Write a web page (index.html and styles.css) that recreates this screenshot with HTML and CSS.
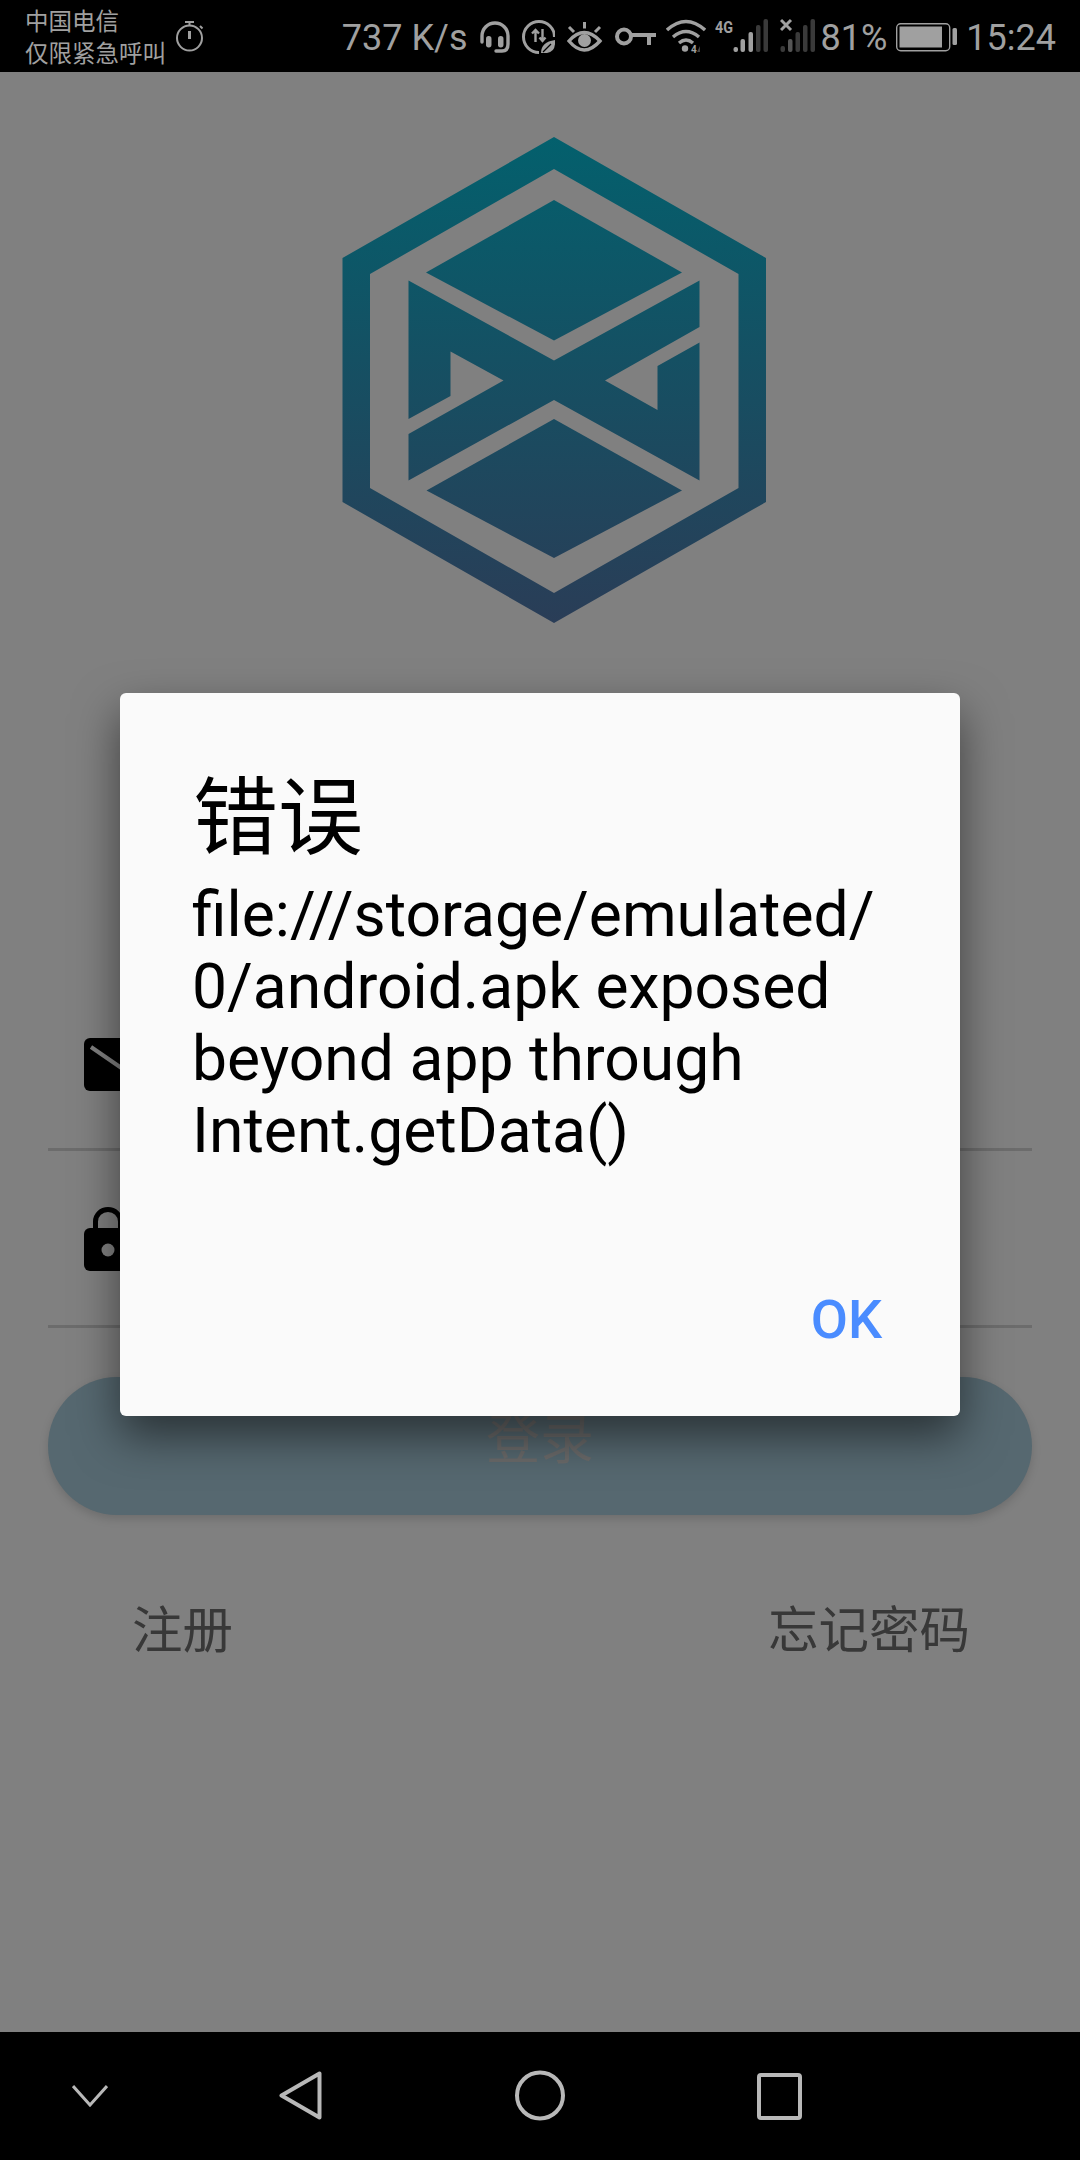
FILE: index.html
```html
<!DOCTYPE html>
<html lang="zh-CN">

<head>
    <title>登录</title>
    <link rel="stylesheet" href="styles.css">
</head>

<body>
    <div class="phone">
        <div class="statusbar">
            <div class="status-left">
                <div class="carrier">中国电信<br>仅限紧急呼叫</div>
                <svg class="icon" width="28" height="72" viewBox="177 0 28 72">
                    <circle cx="190.5" cy="38" r="12.5" fill="none" stroke="#a0a0a0" stroke-width="2" />
                    <path d="M186 22h9M190.5 22v4M201 26l2.5 2.5" fill="none" stroke="#a0a0a0" stroke-width="2" />
                    <path d="M190.5 31v8" fill="none" stroke="#a0a0a0" stroke-width="3" />
                </svg>
            </div>
            <div class="status-right">
                <span class="speed">737 K/s</span>
                <svg class="icon" width="30" height="72" viewBox="479 0 30 72">
                    <path d="M481 42v-6a13 13 0 0 1 26 0v8q0 7-6 7h-6" fill="none" stroke="#a0a0a0" stroke-width="3.4" stroke-linecap="round" />
                    <rect x="485" y="36" width="5.5" height="11.5" rx="2.7" fill="#a0a0a0" />
                    <rect x="497" y="36" width="5.5" height="11.5" rx="2.7" fill="#a0a0a0" />
                </svg>
                <svg class="icon" width="33" height="72" viewBox="521 0 33 72">
                    <path d="M538 52.5a15.5 15.5 0 1 1 15.5-15.5" fill="none" stroke="#a0a0a0" stroke-width="3" />
                    <path d="M534.5 42V30M531 33.5l3.5-3.5 3.5 3.5M541.5 29v12M538.5 37.5l3 3.5 3-3.5" fill="none" stroke="#a0a0a0" stroke-width="2.4" />
                    <path d="M540 53q0-11 14-13 1 12-8 13z" fill="#a0a0a0" />
                    <path d="M542 52l8-8" stroke="#000" stroke-width="1.2" />
                </svg>
                <svg class="icon" width="36" height="72" viewBox="566 0 36 72">
                    <path d="M568 41q15-17 31 0q-16 18-31 0z" fill="none" stroke="#a0a0a0" stroke-width="3.4" />
                    <circle cx="583.5" cy="40.5" r="6.5" fill="#a0a0a0" />
                    <path d="M583.5 22v6.500M568 27l5 5M599 27l-5 5" stroke="#a0a0a0" stroke-width="3" />
                </svg>
                <svg class="icon" width="41" height="72" viewBox="614 0 41 72">
                    <circle cx="623" cy="36.500" r="7" fill="none" stroke="#a0a0a0" stroke-width="4" />
                    <path d="M630 35h25M648 35v10" fill="none" stroke="#a0a0a0" stroke-width="4" />
                </svg>
                <svg class="icon icon-wifi" width="40" height="72" viewBox="665 0 40 72">
                    <path d="M666 30q19-17 38 0M672 37q13-11 26 0M678 43q7-6 14 0" fill="none" stroke="#a0a0a0" stroke-width="3.400" />
                    <circle cx="684" cy="48.500" r="3.200" fill="#a0a0a0" />
                    <text x="690" y="53" font-size="10" font-weight="700" font-family="Roboto" fill="#a0a0a0">4</text>
                    <path d="M699 46v6h-3z" fill="#444" />
                </svg>
                <svg class="icon icon-sim1" width="53" height="72" viewBox="714 0 53 72">
                    <text x="714" y="33" font-size="17" font-weight="700" font-family="Roboto" fill="#a0a0a0" textLength="18" lengthAdjust="spacingAndGlyphs">4G</text>
                    <rect x="732.500" y="47" width="4.500" height="5" rx="2" fill="#a0a0a0" />
                    <rect x="739.500" y="39" width="4.500" height="13" rx="2" fill="#a0a0a0" />
                    <rect x="747.500" y="32" width="4.500" height="20" rx="2" fill="#a0a0a0" />
                    <rect x="755" y="25" width="4.500" height="27" rx="2" fill="#3a3a3a" />
                    <rect x="762.500" y="19" width="4.500" height="33" rx="2" fill="#3a3a3a" />
                </svg>
                <svg class="icon" width="35" height="72" viewBox="779 0 35 72">
                    <path d="M780 20l10 10M790 20l-10 10" stroke="#a0a0a0" stroke-width="3" />
                    <rect x="779.500" y="46" width="4.500" height="6" rx="2" fill="#3a3a3a" />
                    <rect x="787" y="39" width="4.500" height="13" rx="2" fill="#555" />
                    <rect x="794.500" y="32" width="4.500" height="20" rx="2" fill="#3a3a3a" />
                    <rect x="802" y="25" width="4.500" height="27" rx="2" fill="#3a3a3a" />
                    <rect x="809.500" y="19" width="4.500" height="33" rx="2" fill="#3a3a3a" />
                </svg>
                <span class="percent">81%</span>
                <svg class="icon icon-battery" width="61" height="72" viewBox="896 0 61 72">
                    <rect x="896.700" y="23.700" width="53" height="27" rx="4" fill="none" stroke="#a0a0a0" stroke-width="1.400" />
                    <rect x="899.500" y="26.500" width="42.500" height="21" fill="#a0a0a0" />
                    <rect x="952.500" y="28" width="4.500" height="17" rx="1.500" fill="#a0a0a0" />
                </svg>
                <span class="clock">15:24</span>
            </div>
        </div>

        <div class="main">
            <svg class="logo" width="424" height="486" viewBox="342 137 424 486">
                <defs>
                    <linearGradient id="logoGrad" gradientUnits="userSpaceOnUse" x1="0" y1="137" x2="0" y2="623">
                        <stop offset="0" stop-color="#03606d" />
                        <stop offset="1" stop-color="#2a3d57" />
                    </linearGradient>
                </defs>
                <path fill="url(#logoGrad)" fill-rule="evenodd"
                    d="M554 137L766 258V502L554 623L342.500 502V258ZM554 169L370 274V488L554 593L738.500 488V274Z" />
                <path fill="url(#logoGrad)" d="M554 200L682 272.500L554 340.500L426 272.500Z" />
                <path fill="url(#logoGrad)" d="M554 419L682 490.500L554 558L426.500 490.500Z" />
                <path fill="url(#logoGrad)"
                    d="M408.500 280.500L554 360.500L699.500 280.500V327L605 380.500L657.500 410V366L699.500 342.500V480.500L554 400L408.500 480.500V434L503.500 380.500L450.500 351.500V396L408.500 419Z" />
            </svg>

            <div class="form">
                <div class="form-row">
                    <svg class="row-icon" width="72" height="53" viewBox="0 0 72 53">
                        <rect width="72" height="53" rx="6" fill="#000" />
                        <path d="M7 9L36 29L65 9" fill="none" stroke="#808080" stroke-width="4" />
                    </svg>
                </div>
                <div class="form-row form-row-2">
                    <svg class="row-icon" width="48" height="64" viewBox="0 0 48 64">
                        <path d="M11.500 24V14.500a12.500 12 0 0 1 25 0V24" fill="none" stroke="#000" stroke-width="5" />
                        <rect y="21" width="48" height="43" rx="6" fill="#000" />
                        <circle cx="24" cy="43" r="6.500" fill="#808080" />
                    </svg>
                </div>
                <div class="login-btn">登录</div>
                <div class="links">
                    <span>注册</span>
                    <span>忘记密码</span>
                </div>
            </div>

            <div class="dialog">
                <div class="dialog-title">错误</div>
                <div class="dialog-msg">file:///storage/emulated/<br>0/android.apk exposed<br>beyond app through<br>Intent.getData()</div>
                <div class="dialog-ok">OK</div>
            </div>
        </div>

        <div class="navbar">
            <svg class="nav-chevron" width="36" height="128" viewBox="72 2032 36 128">
                <path d="M73 2086L90 2105L107 2086" fill="none" stroke="#b8b8b8" stroke-width="3" />
            </svg>
            <svg class="nav-back" width="43" height="128" viewBox="279 2032 43 128">
                <path d="M319.500 2073.500V2117.500L281.500 2095.500Z" fill="none" stroke="#b8b8b8" stroke-width="4" stroke-linejoin="round" />
            </svg>
            <svg class="nav-home" width="50" height="128" viewBox="515 2032 50 128">
                <circle cx="540" cy="2095.500" r="23" fill="none" stroke="#b8b8b8" stroke-width="4" />
            </svg>
            <svg class="nav-recent" width="45" height="128" viewBox="757 2032 45 128">
                <rect x="759" y="2075" width="41" height="43" rx="2" fill="none" stroke="#b8b8b8" stroke-width="4" />
            </svg>
        </div>
    </div>
</body>

</html>
```

FILE: styles.css
```css
body {
    font-family: Roboto, "Noto Sans CJK SC", sans-serif;
    margin: 0;
    padding: 0;
}

.phone {
    width: 1080px;
    height: 2160px;
    display: flex;
    flex-direction: column;
    overflow: hidden;
    background-color: #808080;
}

.statusbar {
    height: 72px;
    flex: none;
    display: flex;
    justify-content: space-between;
    padding: 0 24px 0 25px;
    background-color: #000;
    color: #a0a0a0;
}

.status-left,
.status-right {
    display: flex;
    align-items: center;
}

.status-left {
    gap: 10px;
}

.status-right > * {
    margin-left: 12px;
}

.icon {
    display: block;
    flex: none;
}

.carrier {
    font-family: "Noto Sans CJK SC", sans-serif;
    font-size: 23.5px;
    line-height: 32px;
}

.speed,
.percent,
.clock {
    align-self: flex-start;
    padding-top: 2px;
    font-size: 36px;
    line-height: 72px;
    white-space: nowrap;
}

.status-right .icon-wifi {
    margin-left: 10px;
}

.status-right .icon-sim1 {
    margin-left: 9px;
}

.status-right .percent {
    margin-left: 6px;
}

.status-right .icon-battery {
    margin-left: 9px;
}

.status-right .clock {
    margin-left: 9px;
}

.main {
    flex: 1;
    position: relative;
    display: flex;
    flex-direction: column;
    align-items: center;
}

.logo {
    display: block;
    align-self: flex-start;
    margin: 65px 0 0 342px;
    flex: none;
}

.form {
    width: 984px;
    margin-top: 351px;
}

.form-row {
    height: 177px;
    box-sizing: border-box;
    display: flex;
    align-items: flex-end;
    padding: 0 0 57px 36px;
    border-bottom: 3px solid #6c6c6c;
}

.form-row-2 {
    padding-bottom: 54px;
}

.row-icon {
    display: block;
}

.login-btn {
    height: 138px;
    margin-top: 49px;
    padding-bottom: 22px;
    box-sizing: border-box;
    display: flex;
    align-items: center;
    justify-content: center;
    border-radius: 69px;
    background-color: #566870;
    box-shadow: 0 4px 10px rgba(0, 0, 0, 0.15);
    color: #6a6a6a;
    font-family: "Noto Sans CJK SC", sans-serif;
    font-size: 54px;
}

.links {
    display: flex;
    justify-content: space-between;
    margin-top: 76px;
    padding: 0 62px 0 84px;
    color: #383838;
    font-family: "Noto Sans CJK SC", sans-serif;
    font-size: 50.5px;
    line-height: 70px;
}

.dialog {
    position: absolute;
    left: 120px;
    top: 621px;
    width: 840px;
    height: 723px;
    box-sizing: border-box;
    padding: 68px 78px 0 73px;
    border-radius: 6px;
    background-color: #fafafa;
    box-shadow: 0 20px 46px rgba(0, 0, 0, 0.52);
    color: #000;
}

.dialog-title {
    margin-bottom: 18px;
    font-family: "Noto Sans CJK SC", sans-serif;
    font-size: 85px;
    line-height: 100px;
}

.dialog-msg {
    margin-left: -1px;
    font-size: 62.4px;
    line-height: 72px;
    white-space: nowrap;
}

.dialog-ok {
    margin-top: 123px;
    text-align: right;
    color: #4a8cff;
    font-size: 54px;
    font-weight: 500;
    line-height: 60px;
}

.navbar {
    height: 128px;
    flex: none;
    display: flex;
    padding-left: 72px;
    background-color: #000;
}

.nav-back {
    margin-left: 171px;
}

.nav-home {
    margin-left: 193px;
}

.nav-recent {
    margin-left: 192px;
}
```
